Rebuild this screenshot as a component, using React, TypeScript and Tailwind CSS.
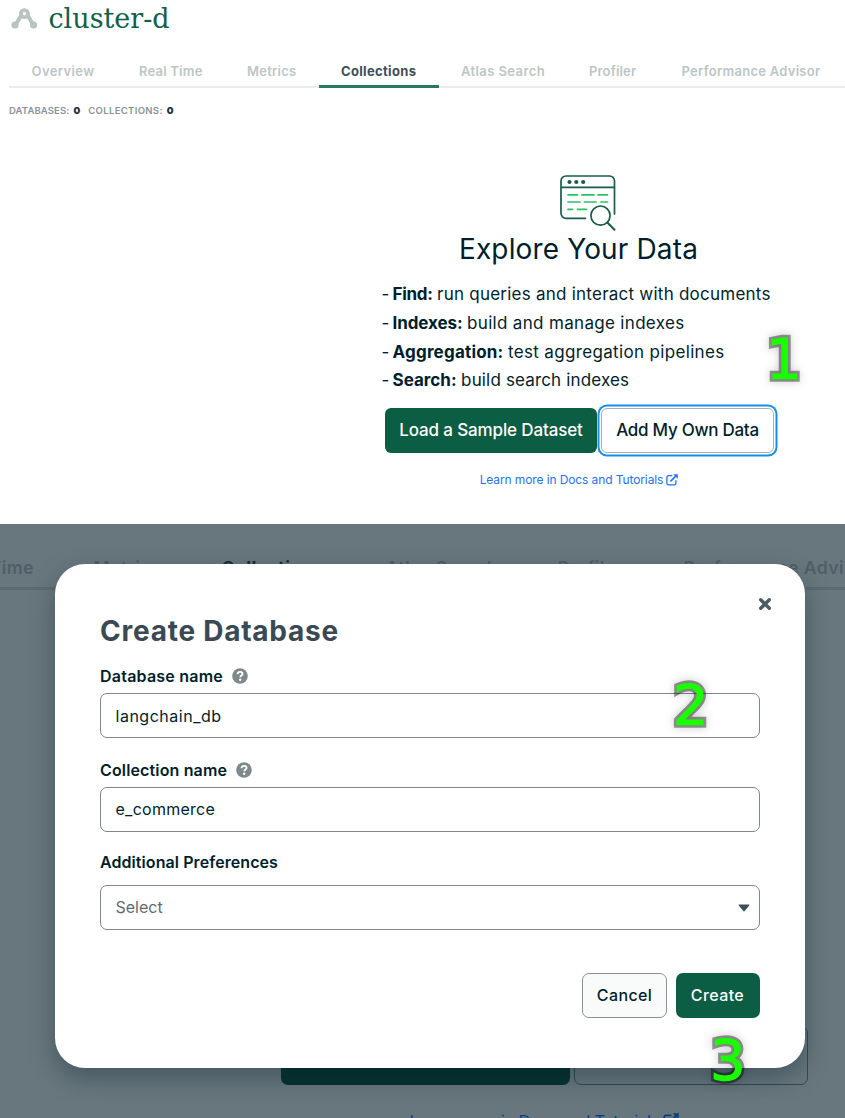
import type { ReactNode } from "react";
import clsx from "clsx";

const tabs = [
  { label: "Overview", top: "w-[107.5px] tracking-[0.03em]", behind: "w-[147px]" },
  { label: "Real Time", top: "w-[108px] tracking-[0.016em]", behind: "w-[147px]" },
  { label: "Metrics", top: "w-[94px] tracking-[0.02em]", behind: "w-[128px]" },
  { label: "Collections", top: "w-[120px] tracking-[0.025em]", behind: "w-[164px]" },
  { label: "Atlas Search", top: "w-[128px] tracking-[0.031em]", behind: "w-[172px]" },
  { label: "Profiler", top: "w-[92.5px] tracking-[0.013em]", behind: "w-[126px]" },
  { label: "Performance Advisor", top: "w-[183px] tracking-[0.021em]", behind: "w-[250px]" },
];

const features = [
  { name: "Find:", text: "run queries and interact with documents", nameCls: "tracking-[-0.018em]", textCls: "tracking-[0.014em]" },
  { name: "Indexes:", text: "build and manage indexes", nameCls: "tracking-[-0.005em]", textCls: "tracking-[0.019em]" },
  { name: "Aggregation:", text: "test aggregation pipelines", nameCls: "tracking-[0.012em]", textCls: "tracking-[0.020em]" },
  { name: "Search:", text: "build search indexes", nameCls: "", textCls: "tracking-[0.009em]" },
];

function ClusterIcon() {
  return (
    <svg width="27" height="21" viewBox="0 0 27 21" fill="none">
      <path d="M10 7.5 4.8 16.500M16.800 7.500 22 16.500" stroke="#b8c4c2" strokeWidth="4" />
      <circle cx="13.4" cy="5.6" r="3.6" stroke="#b8c4c2" strokeWidth="3.6" />
      <circle cx="4" cy="17" r="3.6" fill="#b8c4c2" />
      <circle cx="22.6" cy="17" r="3.6" fill="#b8c4c2" />
    </svg>
  );
}

function ExploreIcon() {
  return (
    <svg width="56" height="56" viewBox="0 0 56 56" fill="none" strokeLinecap="round" strokeWidth="1.7">
      <path d="M25.5 43.3H6a5 5 0 0 1-5-5V6a5 5 0 0 1 5-5h43.5a5 5 0 0 1 5 5v33M1 12.3h53.5" stroke="#1a5c48" />
      <g fill="#1a5c48">
        <circle cx="9.5" cy="7" r="2.1" />
        <circle cx="16.3" cy="7" r="2.1" />
        <circle cx="23.2" cy="7" r="2.1" />
      </g>
      <path d="M8 19.8h9.5M22 19.8h12M38 19.8h9.5M8 27h12M24.5 27h11.5M41 27h6.5M8 34.4h4.5M17.5 34.4h9" stroke="#2bc163" />
      <circle cx="40.5" cy="40.6" r="9.6" stroke="#1a5c48" />
      <path d="m47.6 47.8 6.9 6.9" stroke="#1a5c48" strokeWidth="2" />
    </svg>
  );
}

function ExternalIcon({ className }: { className: string }) {
  return (
    <svg className={className} viewBox="0 0 12 12" fill="none" stroke="currentColor" strokeWidth="1.3">
      <path d="M6.3 1.7H2.4C1.5 1.7.9 2.3.9 3.2v6.2c0 .9.6 1.5 1.5 1.5h6c.9 0 1.5-.6 1.5-1.5V6.2" />
      <path d="M4.4 7.5 9.5 2.4" strokeWidth="1.7" />
      <path d="M7.2.2h4.6v4.6z" fill="currentColor" stroke="none" />
    </svg>
  );
}

function HelpIcon() {
  return (
    <svg width="16" height="16" viewBox="0 0 16 16">
      <circle cx="8" cy="8" r="7.8" fill="#7e898c" />
      <path d="M5.6 6.2c.1-1.5 1.1-2.3 2.5-2.3 1.4 0 2.4.8 2.4 2 0 1.7-2.2 1.7-2.2 3.3" fill="none" stroke="#fff" strokeWidth="1.9" />
      <circle cx="8.2" cy="11.7" r="1.2" fill="#fff" />
    </svg>
  );
}

function Step({ className, children }: { className: string; children: ReactNode }) {
  return (
    <span
      className={clsx(
        "absolute z-10 font-['DejaVu_Sans',sans-serif] text-[56px] leading-[60px] text-[#1aff00] [-webkit-text-stroke:1.2px_#1aff00] before:absolute before:inset-0 before:-z-10 before:text-transparent before:[-webkit-text-stroke:6.5px_rgba(0,0,0,0.4)] before:drop-shadow-[0_0_4px_rgba(0,0,0,0.5)]",
        className,
      )}
    >
      {children}
    </span>
  );
}

function Field({ label, labelCls, help, children }: { label: string; labelCls: string; help?: boolean; children: ReactNode }) {
  return (
    <div className="flex flex-col">
      <div className="flex h-5 items-center gap-[9px]">
        <span className={clsx("text-[16px] leading-5 font-semibold text-[#001e2b]", labelCls)}>{label}</span>
        {help && <HelpIcon />}
      </div>
      {children}
    </div>
  );
}

const box = "flex h-[45px] items-center rounded-[7px] border border-[#7c888c] px-[14.5px] text-[16px]";

export default function App() {
  return (
    <div className="relative h-[1118px] w-[845px] overflow-hidden bg-white font-['Inter','Liberation_Sans',sans-serif] text-[#001e2b]">
      <section className="flex h-[524px] flex-col overflow-hidden">
        <header className="flex h-[37px] items-center gap-[11px] pl-[10.5px]">
          <ClusterIcon />
          <h1 className="font-['DejaVu_Serif',serif] text-[27px] leading-[36px] text-[#116149]">cluster-d</h1>
        </header>
        <nav className="mt-[18px] ml-[9px] flex h-[33px] shrink-0 border-b-2 border-[#e7eeec]">
          {tabs.map((t) => (
            <span
              key={t.label}
              className={clsx(
                "-mb-[2px] flex h-[33px] shrink-0 items-center pl-[22.5px] text-[13px] whitespace-nowrap",
                t.top,
                t.label === "Collections" ? "border-b-[3px] border-[#277a60] pt-[3px] font-bold text-[#3d4f58]" : "border-b-2 border-transparent pt-[2px] font-semibold text-[#bcc6c4]",
              )}
            >
              {t.label}
            </span>
          ))}
        </nav>
        <div className="mt-[15px] ml-[9px] flex h-4 shrink-0 items-center text-[9.5px] font-semibold text-[#889397]">
          <span className="tracking-[0.014em]">DATABASES:</span>
          <b className="ml-[4px] text-[#21313c]">0</b>
          <span className="ml-[8px] tracking-[0.036em]">COLLECTIONS:</span>
          <b className="ml-[4px] text-[#21313c]">0</b>
        </div>
        <div className="mt-[56px] ml-[381.5px] flex w-[394px] flex-col items-center">
          <div className="pl-[18px]"><ExploreIcon /></div>
          <h2 className="text-[28px] leading-[36px] tracking-[0.005em]">Explore Your Data</h2>
          <ul className="mt-[13px] self-stretch text-[17px] leading-[28.8px]">
            {features.map((f) => (
              <li key={f.name} className="flex whitespace-nowrap">
                <span className="w-[11px]">-</span>
                <b className={f.nameCls}>{f.name}</b>
                <span className={clsx("ml-[4.5px]", f.textCls)}>{f.text}</span>
              </li>
            ))}
          </ul>
          <div className="mt-[12.8px] flex gap-[4px] self-stretch pl-[3.5px]">
            <button className="h-[45px] w-[212px] rounded-[6px] bg-[#0b5d43] pt-px text-[17px] font-medium tracking-[-0.008em] whitespace-nowrap text-white">Load a Sample Dataset</button>
            <button className="h-[45px] w-[173px] rounded-[6px] border border-[#a9afb2] bg-white pt-px text-[17px] font-medium tracking-[-0.016em] whitespace-nowrap shadow-[0_0_0_1.5px_#fff,0_0_0_3.5px_#1490e8]">Add My Own Data</button>
          </div>
          <a className="mt-[18px] flex items-center gap-[3px] pl-px text-[12px] leading-[18px] tracking-[-0.009em] text-[#2472f0]">
            Learn more in Docs and Tutorials
            <ExternalIcon className="size-3" />
          </a>
        </div>
      </section>

      <section className="grid h-[594px] grid-cols-[845px] grid-rows-[594px] overflow-hidden bg-[#68777d]">
        <div className="col-start-1 row-start-1 flex flex-col overflow-hidden">
          <nav className="-ml-[230.5px] flex h-[66px] w-[1234px] shrink-0 items-end border-b-[3px] border-[#5c6b71] pb-[7px]">
            {tabs.map((t) => (
              <span
                key={t.label}
                className={clsx(
                  "shrink-0 pl-[30px] text-[17.7px] leading-6 tracking-[0.022em] whitespace-nowrap",
                  t.behind,
                  t.label === "Collections" ? "font-bold text-[#182f38]" : "font-semibold text-[#4f5f66]",
                )}
              >
                {t.label}
              </span>
            ))}
          </nav>
          <div className="mt-[436px] ml-[281px] flex gap-[4px]">
            <div className="h-[59px] w-[289px] rounded-[7px] bg-[#08332f]" />
            <div className="h-[59px] w-[234px] rounded-[7px] border border-[#344950]" />
          </div>
          <a className="mt-[24px] ml-[409.5px] flex items-center gap-[4px] text-[16.4px] leading-6 tracking-[-0.011em] whitespace-nowrap text-[#0b3f85]">
            Learn more in Docs and Tutorials
            <ExternalIcon className="size-4" />
          </a>
        </div>

        <div className="relative col-start-1 row-start-1 mt-[40px] ml-[55px] flex h-[504px] w-[750px] flex-col rounded-[30px] bg-white px-[45px] shadow-[0_10px_24px_rgba(0,30,43,0.35)]">
          <div className="-mr-[12px] flex h-[20px] justify-end pt-[33px]">
            <svg className="size-[14px] shrink-0" viewBox="0 0 14 14" stroke="#4b5d67" strokeWidth="3.4" strokeLinecap="round">
              <path d="m2.7 2.7 8.6 8.6M11.3 2.7l-8.6 8.6" />
            </svg>
          </div>
          <h2 className="mt-[16px] text-[28px] leading-[36px] font-bold tracking-[0.027em] text-[#3a4953]">Create Database</h2>
          <div className="mt-[17px]">
            <Field label="Database name" labelCls="tracking-[0.014em]" help>
              <div className={clsx(box, "mt-[7px] tracking-[0.032em]")}>langchain_db</div>
            </Field>
          </div>
          <div className="mt-[22px]">
            <Field label="Collection name" labelCls="tracking-[0.009em]" help>
              <div className={clsx(box, "mt-[7px] pb-[2px] tracking-[0.016em]")}>e_commerce</div>
            </Field>
          </div>
          <div className="mt-[20px]">
            <Field label="Additional Preferences" labelCls="tracking-[0.005em]">
              <div className={clsx(box, "mt-[13px] justify-between pr-[9px] text-[#5c6c75]")}>
                <span className="pb-[2px]">Select</span>
                <svg className="mt-px" width="12" height="8" viewBox="0 0 12 8" fill="#3d4f58"><path d="M1.2.5h9.6c.6 0 .8.6.4 1L6.7 7c-.4.4-1 .4-1.4 0L.8 1.5C.4 1.1.6.5 1.2.5Z" /></svg>
              </div>
            </Field>
          </div>
          <div className="mt-[43px] flex justify-end gap-[9px]">
            <button className="h-[45px] w-[85px] rounded-[7px] border border-[#889397] bg-[#f9fbfa] pb-[2px] text-[16px] font-medium tracking-[0.023em]">Cancel</button>
            <button className="h-[45px] w-[84px] rounded-[7px] bg-[#0b5d43] pr-[1px] pb-[2px] text-[16px] font-medium tracking-[0.025em] text-white">Create</button>
          </div>
        </div>
      </section>

      <Step className="top-[329px] left-[766px] before:content-['1']">1</Step>
      <Step className="top-[675px] left-[673px] before:content-['2']">2</Step>
      <Step className="top-[1030px] left-[710px] before:content-['3']">3</Step>
    </div>
  );
}
